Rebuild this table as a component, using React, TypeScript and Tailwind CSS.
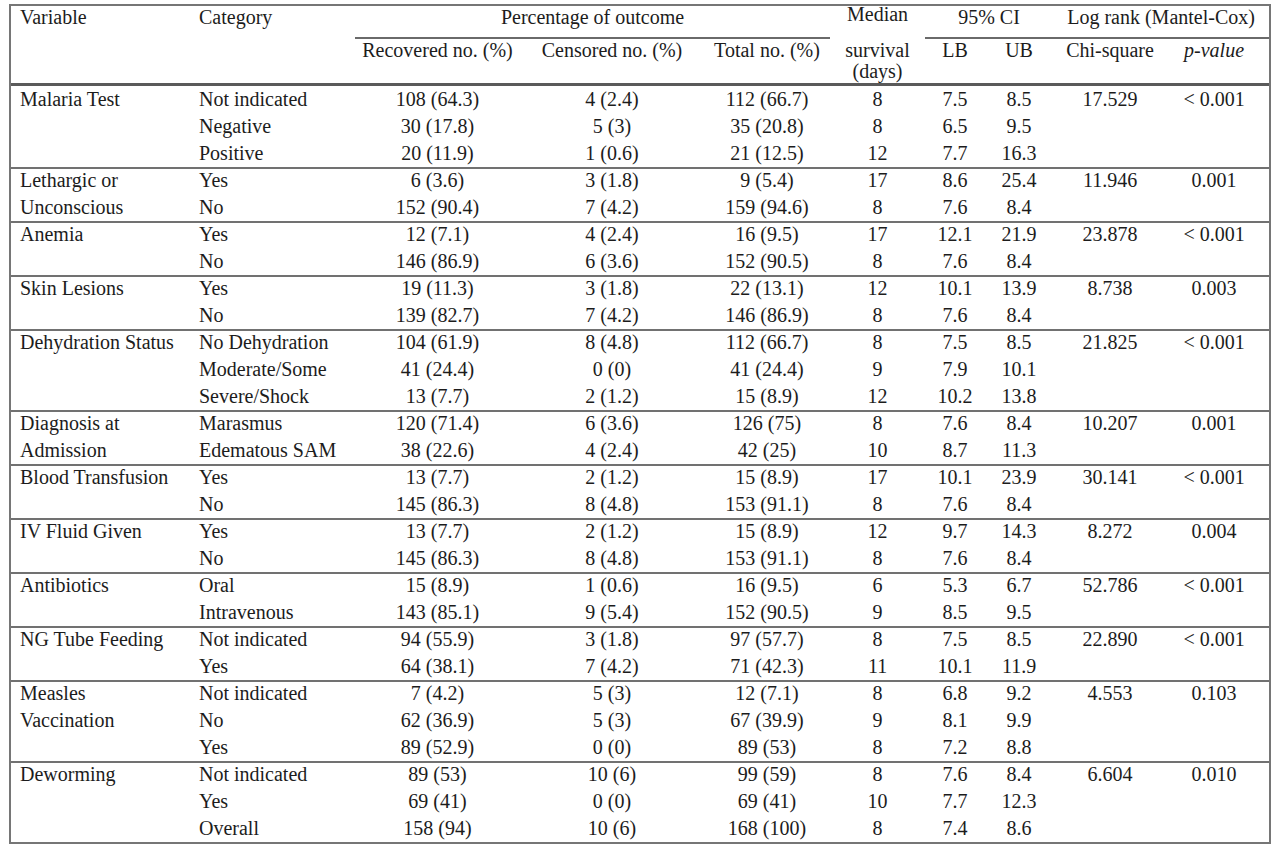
import React from 'react'

type Row = {
  category: string
  recovered: string
  censored: string
  total: string
  median: string
  lb: string
  ub: string
}

type Group = {
  variable: string[]
  chi: string
  p: string
  rows: Row[]
}

const r = (category: string, recovered: string, censored: string, total: string, median: string, lb: string, ub: string): Row => ({
  category, recovered, censored, total, median, lb, ub,
})

const groups: Group[] = [
  {
    variable: ['Malaria Test'], chi: '17.529', p: '< 0.001',
    rows: [
      r('Not indicated', '108 (64.3)', '4 (2.4)', '112 (66.7)', '8', '7.5', '8.5'),
      r('Negative', '30 (17.8)', '5 (3)', '35 (20.8)', '8', '6.5', '9.5'),
      r('Positive', '20 (11.9)', '1 (0.6)', '21 (12.5)', '12', '7.7', '16.3'),
    ],
  },
  {
    variable: ['Lethargic or', 'Unconscious'], chi: '11.946', p: '0.001',
    rows: [
      r('Yes', '6 (3.6)', '3 (1.8)', '9 (5.4)', '17', '8.6', '25.4'),
      r('No', '152 (90.4)', '7 (4.2)', '159 (94.6)', '8', '7.6', '8.4'),
    ],
  },
  {
    variable: ['Anemia'], chi: '23.878', p: '< 0.001',
    rows: [
      r('Yes', '12 (7.1)', '4 (2.4)', '16 (9.5)', '17', '12.1', '21.9'),
      r('No', '146 (86.9)', '6 (3.6)', '152 (90.5)', '8', '7.6', '8.4'),
    ],
  },
  {
    variable: ['Skin Lesions'], chi: '8.738', p: '0.003',
    rows: [
      r('Yes', '19 (11.3)', '3 (1.8)', '22 (13.1)', '12', '10.1', '13.9'),
      r('No', '139 (82.7)', '7 (4.2)', '146 (86.9)', '8', '7.6', '8.4'),
    ],
  },
  {
    variable: ['Dehydration Status'], chi: '21.825', p: '< 0.001',
    rows: [
      r('No Dehydration', '104 (61.9)', '8 (4.8)', '112 (66.7)', '8', '7.5', '8.5'),
      r('Moderate/Some', '41 (24.4)', '0 (0)', '41 (24.4)', '9', '7.9', '10.1'),
      r('Severe/Shock', '13 (7.7)', '2 (1.2)', '15 (8.9)', '12', '10.2', '13.8'),
    ],
  },
  {
    variable: ['Diagnosis at', 'Admission'], chi: '10.207', p: '0.001',
    rows: [
      r('Marasmus', '120 (71.4)', '6 (3.6)', '126 (75)', '8', '7.6', '8.4'),
      r('Edematous SAM', '38 (22.6)', '4 (2.4)', '42 (25)', '10', '8.7', '11.3'),
    ],
  },
  {
    variable: ['Blood Transfusion'], chi: '30.141', p: '< 0.001',
    rows: [
      r('Yes', '13 (7.7)', '2 (1.2)', '15 (8.9)', '17', '10.1', '23.9'),
      r('No', '145 (86.3)', '8 (4.8)', '153 (91.1)', '8', '7.6', '8.4'),
    ],
  },
  {
    variable: ['IV Fluid Given'], chi: '8.272', p: '0.004',
    rows: [
      r('Yes', '13 (7.7)', '2 (1.2)', '15 (8.9)', '12', '9.7', '14.3'),
      r('No', '145 (86.3)', '8 (4.8)', '153 (91.1)', '8', '7.6', '8.4'),
    ],
  },
  {
    variable: ['Antibiotics'], chi: '52.786', p: '< 0.001',
    rows: [
      r('Oral', '15 (8.9)', '1 (0.6)', '16 (9.5)', '6', '5.3', '6.7'),
      r('Intravenous', '143 (85.1)', '9 (5.4)', '152 (90.5)', '9', '8.5', '9.5'),
    ],
  },
  {
    variable: ['NG Tube Feeding'], chi: '22.890', p: '< 0.001',
    rows: [
      r('Not indicated', '94 (55.9)', '3 (1.8)', '97 (57.7)', '8', '7.5', '8.5'),
      r('Yes', '64 (38.1)', '7 (4.2)', '71 (42.3)', '11', '10.1', '11.9'),
    ],
  },
  {
    variable: ['Measles', 'Vaccination'], chi: '4.553', p: '0.103',
    rows: [
      r('Not indicated', '7 (4.2)', '5 (3)', '12 (7.1)', '8', '6.8', '9.2'),
      r('No', '62 (36.9)', '5 (3)', '67 (39.9)', '9', '8.1', '9.9'),
      r('Yes', '89 (52.9)', '0 (0)', '89 (53)', '8', '7.2', '8.8'),
    ],
  },
  {
    variable: ['Deworming'], chi: '6.604', p: '0.010',
    rows: [
      r('Not indicated', '89 (53)', '10 (6)', '99 (59)', '8', '7.6', '8.4'),
      r('Yes', '69 (41)', '0 (0)', '69 (41)', '10', '7.7', '12.3'),
      r('Overall', '158 (94)', '10 (6)', '168 (100)', '8', '7.4', '8.6'),
    ],
  },
]

export default function App() {
  return (
    <div className="min-h-[854px] bg-white pt-[4px] pl-[9px] font-['Liberation_Serif','Times_New_Roman',serif] text-[20px] text-[#1c1c1c]">
      <div className="w-[1262px] border-2 border-[#767676]">
        <table className="table-fixed border-separate border-spacing-0 w-[1258px]">
          <colgroup>
            <col className="w-[179px]" />
            <col className="w-[165px]" />
            <col className="w-[165px]" />
            <col className="w-[184px]" />
            <col className="w-[126px]" />
            <col className="w-[95px]" />
            <col className="w-[60px]" />
            <col className="w-[68px]" />
            <col className="w-[114px]" />
            <col className="w-[102px]" />
          </colgroup>
          <thead>
            {/* top header row */}
            <tr className="h-[33px] align-top leading-[20px]">
              <th className="pl-[9px] pt-[1px] text-left font-normal">Variable</th>
              <th className="pl-[9px] pt-[1px] text-left font-normal">Category</th>
              <th colSpan={3} className="pt-[1px] text-center font-normal shadow-[inset_0_-2px_0_#6a6a6a]">
                Percentage of outcome
              </th>
              <th className="pt-0 text-center font-normal leading-[16px]">Median</th>
              <th colSpan={2} className="pt-[1px] text-center font-normal shadow-[inset_0_-2px_0_#6a6a6a]">
                95% CI
              </th>
              <th colSpan={2} className="pt-[1px] text-center font-normal shadow-[inset_0_-2px_0_#6a6a6a]">
                Log rank (Mantel-Cox)
              </th>
            </tr>
            {/* sub header row */}
            <tr className="h-[47px] align-top leading-[20px] [&>th]:shadow-[inset_0_-3px_0_#5a5a5a] [&>th]:pt-[1px] [&>th]:font-normal">
              <th />
              <th />
              <th className="text-center">Recovered no. (%)</th>
              <th className="text-center">Censored no. (%)</th>
              <th className="text-center">Total no. (%)</th>
              <th className="text-center leading-[21px]">
                survival
                <br />
                (days)
              </th>
              <th className="text-center">LB</th>
              <th className="text-center">UB</th>
              <th className="text-center">Chi-square</th>
              <th className="pr-[8px] text-center italic">p-value</th>
            </tr>
          </thead>
          {groups.map((g, gi) => (
            <tbody key={g.variable.join(' ')}>
              {g.rows.map((row, ri) => {
                const sep = ri === 0 && gi > 0
                return (
                  <tr
                    key={row.category}
                    className={
                      'h-[27px] leading-[27px] whitespace-nowrap ' +
                      (sep ? '[&>td]:shadow-[inset_0_2px_0_#717171]' : '')
                    }
                  >
                    <td className="pl-[9px] text-left">{g.variable[ri] ?? ''}</td>
                    <td className="pl-[9px] text-left">{row.category}</td>
                    <td className="text-center">{row.recovered}</td>
                    <td className="text-center">{row.censored}</td>
                    <td className="text-center">{row.total}</td>
                    <td className="text-center">{row.median}</td>
                    <td className="text-center">{row.lb}</td>
                    <td className="text-center">{row.ub}</td>
                    <td className="text-center">{ri === 0 ? g.chi : ''}</td>
                    <td className="pr-[8px] text-center">{ri === 0 ? g.p : ''}</td>
                  </tr>
                )
              })}
            </tbody>
          ))}
        </table>
      </div>
    </div>
  )
}
